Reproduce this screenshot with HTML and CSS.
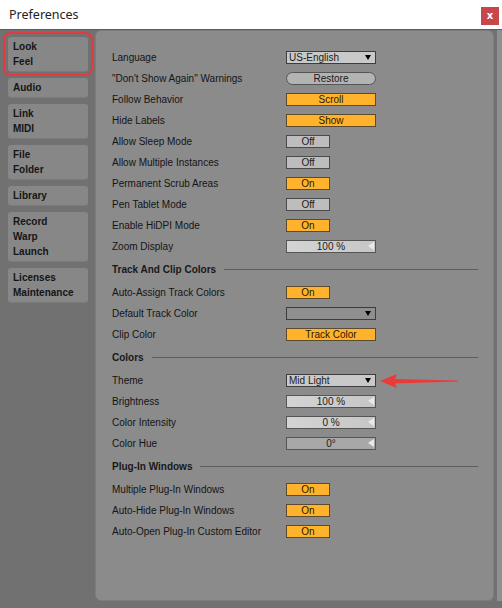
FILE: index.html
```html
<!DOCTYPE html>
<html lang="en">
<head>
  <meta charset="UTF-8">
  <meta name="viewport" content="width=device-width, initial-scale=1.0">
  <title>Preferences</title>
  <link rel="stylesheet" href="styles.css">
</head>
<body>

<div class="window">
  <div class="titlebar">
    <span class="title">Preferences</span>
    <button class="close">x</button>
  </div>

  <div class="main">
    <!-- Tabs on the left -->
    <ul class="tabs">
      <li class="tab selected">Look<br>Feel</li>
      <li class="tab">Audio</li>
      <li class="tab">Link<br>MIDI</li>
      <li class="tab">File<br>Folder</li>
      <li class="tab">Library</li>
      <li class="tab">Record<br>Warp<br>Launch</li>
      <li class="tab">Licenses<br>Maintenance</li>
    </ul>

    <!-- Look / Feel settings -->
    <div class="panel">
      <div class="row"><span class="label">Language</span><span class="ctl drop">US-English<i class="tri"></i></span></div>
      <div class="row"><span class="label">"Don't Show Again" Warnings</span><span class="ctl pill">Restore</span></div>
      <div class="row"><span class="label">Follow Behavior</span><span class="ctl wide on">Scroll</span></div>
      <div class="row"><span class="label">Hide Labels</span><span class="ctl wide on">Show</span></div>
      <div class="row"><span class="label">Allow Sleep Mode</span><span class="ctl toggle">Off</span></div>
      <div class="row"><span class="label">Allow Multiple Instances</span><span class="ctl toggle">Off</span></div>
      <div class="row"><span class="label">Permanent Scrub Areas</span><span class="ctl toggle on">On</span></div>
      <div class="row"><span class="label">Pen Tablet Mode</span><span class="ctl toggle">Off</span></div>
      <div class="row"><span class="label">Enable HiDPI Mode</span><span class="ctl toggle on">On</span></div>
      <div class="row"><span class="label">Zoom Display</span><span class="ctl value">100 %<i class="nub"></i></span></div>

      <div class="section">Track And Clip Colors</div>
      <div class="row"><span class="label">Auto-Assign Track Colors</span><span class="ctl toggle on">On</span></div>
      <div class="row"><span class="label">Default Track Color</span><span class="ctl drop empty"><i class="tri"></i></span></div>
      <div class="row"><span class="label">Clip Color</span><span class="ctl wide on">Track Color</span></div>

      <div class="section">Colors</div>
      <div class="row">
        <span class="label">Theme</span><span class="ctl drop">Mid Light<i class="tri"></i></span>
        <svg class="arrow" width="80" height="16" viewBox="0 0 80 16">
          <path d="M0 8 L17 1 L15 6 L78 7.5 L78 8.5 L15 10.5 L17 15 Z" fill="#ea3b3b"/>
        </svg>
      </div>
      <div class="row"><span class="label">Brightness</span><span class="ctl value">100 %<i class="nub"></i></span></div>
      <div class="row"><span class="label">Color Intensity</span><span class="ctl value">0 %<i class="nub"></i></span></div>
      <div class="row"><span class="label">Color Hue</span><span class="ctl value dark">0°<i class="nub"></i></span></div>

      <div class="section">Plug-In Windows</div>
      <div class="row"><span class="label">Multiple Plug-In Windows</span><span class="ctl toggle on">On</span></div>
      <div class="row"><span class="label">Auto-Hide Plug-In Windows</span><span class="ctl toggle on">On</span></div>
      <div class="row"><span class="label">Auto-Open Plug-In Custom Editor</span><span class="ctl toggle on">On</span></div>
    </div>

    <div class="edge"></div>
  </div>
</div>

</body>
</html>
```

FILE: styles.css
```css
/* Base */
body {
  margin: 0;
  font-family: "Liberation Sans", Arial, sans-serif;
  background: #717171;
}

.window {
  width: 502px;
  height: 608px;
  display: flex;
  flex-direction: column;
  overflow: hidden;
}

/* Title bar */
.titlebar {
  height: 29px;
  flex: none;
  background: #fff;
  display: flex;
  align-items: center;
  justify-content: space-between;
  padding: 0 3px 0 9px;
  border-bottom: 1px solid #5c5c5c;
}

.title {
  font-family: "Noto Sans", sans-serif;
  font-size: 12.5px;
  color: #222;
}

.close {
  width: 18px;
  height: 18px;
  margin-top: 2px;
  border: none;
  padding: 0;
  background: #c8464b;
  color: #fff;
  font-family: "DejaVu Sans", sans-serif;
  font-size: 10px;
  font-weight: bold;
  line-height: 16px;
}

/* Main area */
.main {
  flex: 1;
  display: flex;
  padding: 0 0 7px 0;
}

.tabs {
  list-style: none;
  margin: 0;
  padding: 7px 0 0 8px;
  width: 80px;
  display: flex;
  flex-direction: column;
  gap: 7px;
}

.tab {
  background: #878787;
  border-radius: 3px;
  padding: 2px 5px 2px 5px;
  font-size: 10px;
  font-weight: bold;
  line-height: 15px;
  color: #151515;
  box-shadow: 0 1px 0 #7a7a7a;
}

.tab.selected {
  outline: 2px solid #e3393f;
  outline-offset: 3px;
}

.panel {
  flex: 1;
  margin: 0 0 0 7px;
  background: #8b8b8b;
  border: 1px solid #7d7d7d;
  border-radius: 6px;
  padding: 16px 15px 0 16px;
}

.edge {
  width: 8px;
  background: linear-gradient(90deg, #717171 0 3px, #8f8f8f 3px);
}

/* Settings rows */
.row {
  height: 21px;
  display: flex;
  align-items: center;
  font-size: 10px;
  color: #141414;
}

.label {
  width: 174px;
  flex: none;
}

.section {
  height: 25px;
  display: flex;
  align-items: center;
  gap: 8px;
  font-size: 10px;
  font-weight: bold;
  color: #181818;
}

.section::after {
  content: "";
  flex: 1;
  height: 1px;
  background: #5d5d5d;
}

/* Controls */
.ctl {
  position: relative;
  box-sizing: border-box;
  height: 13px;
  border: 1px solid #4a4a4a;
  font-size: 10px;
  line-height: 11px;
  text-align: center;
  color: #1a1a1a;
}

.toggle {
  width: 44px;
  background: #bdbdbd;
}

.wide {
  width: 90px;
}

.on {
  background: #ffb32c;
  border-color: #5b4b2c;
  color: #2a1800;
}

.pill {
  width: 90px;
  background: #b3b3b3;
  border-color: #555;
  border-radius: 7px;
}

.drop {
  width: 90px;
  background: #c9c9c9;
  border-color: #3d3d3d;
  text-align: left;
  padding-left: 2px;
}

.drop.empty {
  background: #8f8f8f;
}

.tri {
  position: absolute;
  right: 4px;
  top: 3px;
  border-left: 3.5px solid transparent;
  border-right: 3.5px solid transparent;
  border-top: 5px solid #000;
}

.value {
  width: 90px;
  background: linear-gradient(90deg, #d4d4d4, #c6c6c6);
  border-color: #555;
}

.value.dark {
  background: #a8a8a8;
}

.nub {
  position: absolute;
  right: 1px;
  top: 1px;
  border-top: 4.5px solid transparent;
  border-bottom: 4.5px solid transparent;
  border-right: 6px solid #eaeaea;
}

.arrow {
  margin-left: 4px;
}
```
